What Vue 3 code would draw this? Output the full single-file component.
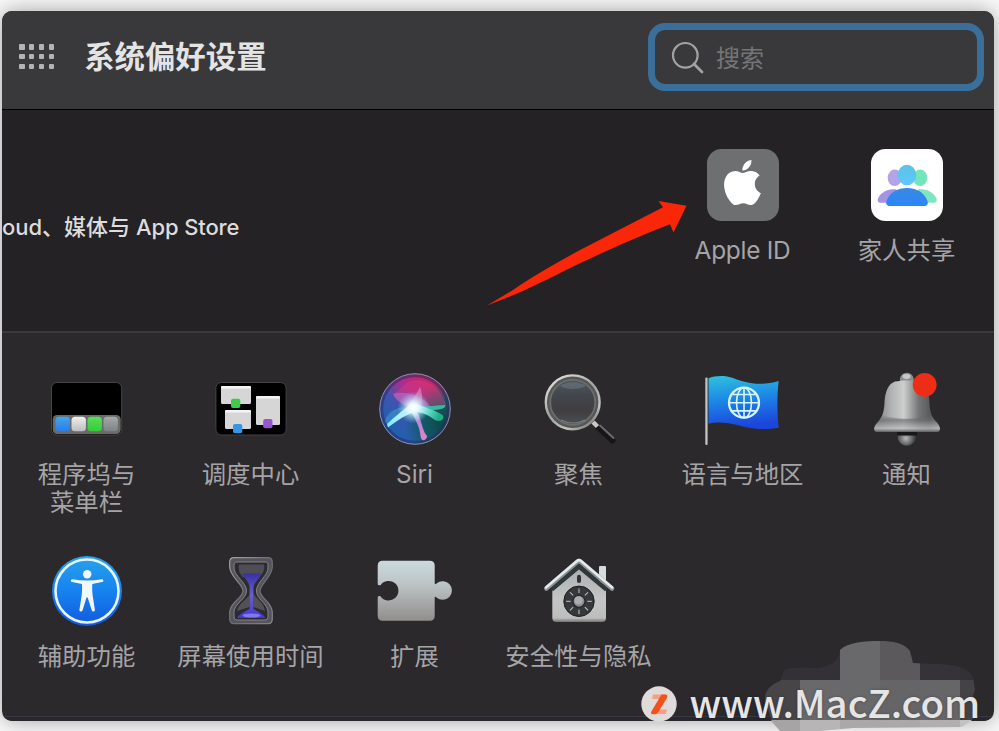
<template>
  <div class="desktop">
    <div class="window">
      <header class="toolbar">
        <button type="button" class="show-all" aria-label="显示全部">
          <span v-for="n in 12" :key="n" class="dot"></span>
        </button>
        <h1 class="title">系统偏好设置</h1>
        <label class="search">
          <svg class="search-icon" viewBox="0 0 34 34">
            <circle cx="15.3" cy="14.3" r="12.3" />
            <path d="M24 23 L32 31" />
          </svg>
          <input v-model="keyword" placeholder="搜索" />
        </label>
      </header>

      <!-- Account -->
      <section class="account">
        <p class="account-desc">oud、媒体与<span class="latin"> App Store</span></p>
        <div class="account-panes">
          <div class="pane">
            <svg class="pane-icon" viewBox="0 0 80 80">
              <rect x="4" y="4" width="72" height="72" rx="14.5" fill="#6d6f71" />
              <path
                transform="translate(16.9 15) scale(1.88)"
                fill="#fff"
                d="M12.152 6.896c-.948 0-2.415-1.078-3.96-1.04-2.04.027-3.91 1.183-4.961 3.014-2.117 3.675-.546 9.103 1.519 12.09 1.013 1.454 2.208 3.09 3.792 3.039 1.52-.065 2.09-.987 3.935-.987 1.831 0 2.35.987 3.96.948 1.637-.026 2.676-1.48 3.676-2.948 1.156-1.688 1.636-3.325 1.662-3.415-.039-.013-3.182-1.221-3.22-4.857-.026-3.04 2.48-4.494 2.597-4.559-1.429-2.09-3.623-2.324-4.39-2.376-2-.156-3.675 1.09-4.61 1.09zM15.53 3.83c.843-1.012 1.4-2.427 1.245-3.83-1.207.052-2.662.805-3.532 1.818-.78.896-1.454 2.338-1.273 3.714 1.338.104 2.715-.688 3.559-1.701"
              />
            </svg>
            <span class="pane-label latin">Apple ID</span>
          </div>
          <div class="pane">
            <svg class="pane-icon" viewBox="0 0 80 80">
              <defs>
                <linearGradient id="famHead" x1="0" y1="0" x2="0" y2="1">
                  <stop offset="0" stop-color="#5cc3e6" />
                  <stop offset="1" stop-color="#62c6fb" />
                </linearGradient>
                <linearGradient id="famBody" x1="0" y1="0" x2="0" y2="1">
                  <stop offset="0" stop-color="#3a8ae0" />
                  <stop offset="1" stop-color="#2b86fa" />
                </linearGradient>
              </defs>
              <rect x="4" y="4" width="72" height="72" rx="14.5" fill="#fff" />
              <ellipse cx="27.7" cy="32.8" rx="7" ry="8.3" fill="#b5a3ea" />
              <ellipse cx="53.2" cy="32.8" rx="7" ry="8.3" fill="#72e6bb" />
              <path d="M14 57.8 C10.5 57.8 10 55 11.5 52.5 C15 46.5 21 44 29 44.3 L38 57.8 Z" fill="#a493e4" />
              <path d="M66.5 57.8 C70 57.8 70.5 55 69 52.5 C65.5 46.5 59.5 44 51.5 44.3 L42 57.8 Z" fill="#7fe6c0" />
              <ellipse cx="40" cy="30" rx="9.3" ry="10.3" fill="url(#famHead)" />
              <path d="M23 61 C19.5 61 18.5 58.5 19.7 55.5 C23 47 31 43 40 43 C49 43 57 47 60.3 55.5 C61.5 58.5 60.5 61 57 61 Z" fill="url(#famBody)" />
            </svg>
            <span class="pane-label">家人共享</span>
          </div>
        </div>
      </section>

      <section class="panes">
        <div v-for="pane in panes" :key="pane.id" class="pane">
          <!-- Dock -->
          <svg v-if="pane.id === 'dock'" class="pane-icon" viewBox="0 0 80 80">
            <defs>
              <linearGradient v-for="(t, i) in dockTiles" :id="'tile' + i" :key="i" x1="0" y1="0" x2="0" y2="1">
                <stop offset="0" :stop-color="t.from" />
                <stop offset="1" :stop-color="t.to" />
              </linearGradient>
            </defs>
            <rect x="4.5" y="13.5" width="70.2" height="52.5" rx="5.5" fill="#000" stroke="#454447" />
            <rect x="5.7" y="46" width="68" height="19" rx="4.5" fill="#6a6a68" />
            <rect v-for="(t, i) in dockTiles" :key="i" :x="t.x" y="47.7" width="14.4" height="14.6" rx="3.5" :fill="`url(#tile${i})`" />
          </svg>

          <!-- Mission Control -->
          <svg v-else-if="pane.id === 'mission'" class="pane-icon" viewBox="0 0 80 80">
            <rect x="4.9" y="13.5" width="70.2" height="52.5" rx="5.5" fill="#000" stroke="#454447" />
            <g v-for="w in missionWindows" :key="w.color">
              <rect :x="w.x" :y="w.y" :width="w.w" :height="w.h" rx="1.5" fill="#d6d6d6" />
              <rect :x="w.x" :y="w.y" :width="w.w" height="2.6" rx="1.2" fill="#f4f4f4" />
              <rect :x="w.bx" :y="w.by" width="9.3" height="9.3" rx="2" :fill="w.color" />
            </g>
          </svg>

          <!-- Siri -->
          <svg v-else-if="pane.id === 'siri'" class="pane-icon" viewBox="0 0 80 80">
            <defs>
              <linearGradient id="siriBase" x1="0.15" y1="0.9" x2="0.8" y2="0.1">
                <stop offset="0" stop-color="#1b62ad" />
                <stop offset="0.42" stop-color="#3d55b0" />
                <stop offset="0.68" stop-color="#b02c8c" />
                <stop offset="1" stop-color="#c72860" />
              </linearGradient>
              <radialGradient id="siriTeal" cx="0.95" cy="0.72" r="0.6">
                <stop offset="0" stop-color="#06463f" />
                <stop offset="0.6" stop-color="#0b5b60" stop-opacity="0.85" />
                <stop offset="1" stop-color="#0b5b60" stop-opacity="0" />
              </radialGradient>
              <radialGradient id="siriGlow">
                <stop offset="0" stop-color="#fff" />
                <stop offset="0.35" stop-color="#e5fbff" stop-opacity="0.85" />
                <stop offset="1" stop-color="#7dd9f0" stop-opacity="0" />
              </radialGradient>
              <linearGradient id="siriLeft" x1="1" y1="0" x2="0" y2="1">
                <stop offset="0" stop-color="#fff" />
                <stop offset="1" stop-color="#72e8f5" />
              </linearGradient>
              <linearGradient id="siriDown" x1="0" y1="0" x2="0.3" y2="1">
                <stop offset="0" stop-color="#fff" />
                <stop offset="0.5" stop-color="#c98be0" />
                <stop offset="1" stop-color="#f088d0" />
              </linearGradient>
              <linearGradient id="siriRight" x1="0" y1="0" x2="1" y2="0.3">
                <stop offset="0" stop-color="#fff" />
                <stop offset="0.5" stop-color="#7be8da" />
                <stop offset="1" stop-color="#1fae8a" />
              </linearGradient>
            </defs>
            <circle cx="40" cy="40" r="35.3" fill="url(#siriBase)" />
            <circle cx="40" cy="40" r="35.3" fill="url(#siriTeal)" />
            <circle cx="40" cy="40" r="33.3" fill="none" stroke="#292b68" stroke-width="3" opacity="0.55" />
            <path d="M33 13 C50 7 66 18 71 36 C62 35 50 37 39 40 C28 36 21 31 18 24 C22 24 27 17 33 13 Z" fill="#e33c7f" opacity="0.4" />
            <path d="M18 25 C28 22 45 24 56 38 L39 40 C29 37 21 32 18 25 Z" fill="#bb76d7" opacity="0.5" />
            <path d="M10 52 C12 43 23 36 39 39 C28 44 19 50 13 57 Z" fill="#3faee0" opacity="0.45" />
            <path d="M31 40 C37 31 42 24 45 18 C48 26 48 33 44 42 Z" fill="#eba2dc" opacity="0.5" />
            <path d="M36 37 C48 39 60 36 70 36 C72 39 65 41 56 41 L39 42 Z" fill="#43d8bb" opacity="0.75" />
            <path d="M12 55 C19 48 27 42 37 34 L44 42 C32 44 22 52 13 58.5 Z" fill="url(#siriLeft)" />
            <path d="M38 39 C46 43 46 60 52 67 C52 72 46 73 45.5 67 C45 58 40 50 36 42 Z" fill="url(#siriDown)" opacity="0.9" />
            <path d="M38 34 C49 38 60 41 67.5 46 C71 51 63 54 58.5 50 C52 45 45 43 37 42 Z" fill="url(#siriRight)" />
            <circle cx="38.5" cy="38.5" r="16" fill="url(#siriGlow)" />
            <circle cx="40" cy="40" r="35.3" fill="none" stroke="#8f8dad" stroke-width="1" />
          </svg>

          <!-- Spotlight -->
          <svg v-else-if="pane.id === 'spotlight'" class="pane-icon" viewBox="0 0 80 80">
            <defs>
              <linearGradient id="lensRim" x1="0.1" y1="0" x2="0.8" y2="1">
                <stop offset="0" stop-color="#e5e5e3" />
                <stop offset="0.5" stop-color="#a1a1a0" />
                <stop offset="0.8" stop-color="#c4c4c3" />
                <stop offset="1" stop-color="#747474" />
              </linearGradient>
              <linearGradient id="lensGlass" x1="0" y1="0" x2="0" y2="1">
                <stop offset="0" stop-color="#505860" />
                <stop offset="0.35" stop-color="#42464c" />
                <stop offset="0.7" stop-color="#403e40" />
                <stop offset="1" stop-color="#4a5157" />
              </linearGradient>
            </defs>
            <path d="M59 58 L73.5 71.5" stroke="#161617" stroke-width="6" stroke-linecap="round" />
            <path d="M61 56.5 L74.5 69" stroke="#6a6a6b" stroke-width="2" stroke-linecap="round" />
            <path d="M54 53 L58.5 57.5" stroke="#c9c9c7" stroke-width="4.5" />
            <circle cx="33.7" cy="33.3" r="26.9" fill="#565655" stroke="url(#lensRim)" stroke-width="2.4" />
            <circle cx="33.7" cy="33.3" r="22.5" fill="url(#lensGlass)" stroke="#6c6d6d" stroke-width="1.8" />
            <path d="M21 17 C28 12 40 12 47 17 C40 21 28 21 21 17 Z" fill="#7c8a96" opacity="0.4" />
            <path d="M22 51 C30 55 38 55 46 51" fill="none" stroke="#a9abac" stroke-width="1.2" opacity="0.5" />
          </svg>

          <!-- Language & Region -->
          <svg v-else-if="pane.id === 'language'" class="pane-icon" viewBox="0 0 80 80">
            <defs>
              <linearGradient id="flagFill" x1="0" y1="0" x2="0.15" y2="1">
                <stop offset="0" stop-color="#2ec3dd" />
                <stop offset="0.5" stop-color="#1d84e6" />
                <stop offset="1" stop-color="#1b45dc" />
              </linearGradient>
            </defs>
            <path d="M5.5 9.3 C12 6.5 22 6 30 9 C43 14 56 17.5 75.7 12 C74 25 74 44 75.7 58.7 C60 61 48 60 36 56.5 C25 53.5 14 52.5 5.5 54.8 Z" fill="url(#flagFill)" />
            <rect x="2.3" y="8.5" width="2.3" height="67.5" rx="1" fill="#c3c3c1" />
            <g fill="none" stroke="#d5f5fa" stroke-width="1.6">
              <circle cx="41" cy="33.7" r="15" stroke-width="2.3" />
              <ellipse cx="41" cy="33.7" rx="7.5" ry="15" />
              <path d="M41 18.7 V48.7 M26 33.7 H56 M28.5 25.5 H53.5 M28.5 41.9 H53.5" />
            </g>
          </svg>

          <!-- Notifications -->
          <svg v-else-if="pane.id === 'notify'" class="pane-icon" viewBox="0 0 80 80">
            <defs>
              <linearGradient id="bellFill" x1="0" y1="0" x2="1" y2="0">
                <stop offset="0" stop-color="#777879" />
                <stop offset="0.25" stop-color="#aeb0b1" />
                <stop offset="0.45" stop-color="#cdcfcf" />
                <stop offset="0.68" stop-color="#737576" />
                <stop offset="0.85" stop-color="#58595b" />
                <stop offset="1" stop-color="#8b8c8d" />
              </linearGradient>
              <linearGradient id="bellRim" x1="0" y1="0" x2="0" y2="1">
                <stop offset="0" stop-color="#6a6c6e" stop-opacity="0" />
                <stop offset="0.3" stop-color="#6a6c6e" stop-opacity="0.7" />
                <stop offset="0.78" stop-color="#bfc0c0" stop-opacity="0.75" />
                <stop offset="1" stop-color="#5c5c5e" />
              </linearGradient>
              <radialGradient id="bellBall" cx="0.45" cy="0.6">
                <stop offset="0" stop-color="#b7b9ba" />
                <stop offset="1" stop-color="#3d3e40" />
              </radialGradient>
            </defs>
            <circle cx="39.8" cy="67.5" r="9.3" fill="url(#bellBall)" />
            <rect x="30" y="62" width="20" height="4.5" fill="#171719" />
            <circle cx="39.8" cy="10.8" r="7" fill="#8c8d8e" />
            <ellipse cx="39.5" cy="7.5" rx="4" ry="2.4" fill="#c8c8c8" />
            <path d="M28 12.5 C35 11 45 11 52 12.5 C60 16 62 24 62.5 34 C63 46 66 50 70 54 C73.5 58 74 63 69 63 H11 C6 63 6 58 10 54 C14 50 17 45 17.5 34 C18 23 21 15 28 12.5 Z" fill="url(#bellFill)" />
            <path d="M15.5 46 C30 51 50 51 64.5 46 C66 50 72 54 73 59 C73 62 72 63 69 63 H11 C8 63 7 61 7.5 58.5 C9 54 14 52 15.5 46 Z" fill="url(#bellRim)" />
            <circle cx="57.7" cy="15.8" r="11.9" fill="#ee2d17" />
          </svg>

          <!-- Accessibility -->
          <svg v-else-if="pane.id === 'access'" class="pane-icon" viewBox="0 0 80 80">
            <defs>
              <linearGradient id="accessFill" x1="0" y1="0" x2="0" y2="1">
                <stop offset="0" stop-color="#26a4e8" />
                <stop offset="0.5" stop-color="#1682f0" />
                <stop offset="1" stop-color="#1259dd" />
              </linearGradient>
            </defs>
            <circle cx="40" cy="40" r="35" fill="url(#accessFill)" />
            <circle cx="40" cy="40" r="31.5" fill="none" stroke="#e8f4ff" stroke-width="2.6" />
            <g fill="#f2f7fc">
              <circle cx="40.2" cy="23.2" r="4.2" />
              <path d="M25.5 28.2 C35 29.8 45 29.8 54.7 28.2 C56.7 28 57 30.6 55 31.1 L45.3 33 C45 38 45.3 43 46.2 48 L47.9 58.8 C48.1 61 45.4 61.2 44.7 59.2 L40.7 46.5 H39.5 L35.6 59.2 C34.9 61.2 32.2 61 32.4 58.8 L34.1 48 C35 43 35.3 38 35 33 L25.2 31.1 C23.3 30.6 23.5 28 25.5 28.2 Z" />
            </g>
          </svg>

          <!-- Screen Time -->
          <svg v-else-if="pane.id === 'screentime'" class="pane-icon" viewBox="0 0 80 80">
            <defs>
              <linearGradient id="sand" x1="0" y1="0" x2="0" y2="1">
                <stop offset="0" stop-color="#3830a3" />
                <stop offset="0.5" stop-color="#6961c8" />
                <stop offset="1" stop-color="#4336d5" />
              </linearGradient>
              <linearGradient id="glassEdge" x1="0" y1="0" x2="1" y2="1">
                <stop offset="0" stop-color="#a5a4a8" />
                <stop offset="0.5" stop-color="#6c6b71" />
                <stop offset="1" stop-color="#85848b" />
              </linearGradient>
            </defs>
            <path d="M23 6.7 H57 C60 6.7 61.3 8.5 61.3 11.5 V16 C61 26 49 33 49 40 C49 47 61 51 61.3 61 V68 C61.3 71 60 72.7 57 72.7 H23 C20 72.7 18.7 71 18.7 68 V61 C19 51 32 47 32 40 C32 33 19 26 18.7 16 V11.5 C18.7 8.5 20 6.7 23 6.7 Z" fill="#56555b" stroke="url(#glassEdge)" stroke-width="1.2" />
            <path d="M27 11 H54 C56 11 57 12 57 14 V17 C57 25 45.5 31 45.5 40 C45.5 48 57 53 57 61 V65 C57 68 56 69 53 69 H27 C24 69 23 68 23 65 V61 C23 53 35.5 48 35.5 40 C35.5 31 23 25 23 17 V14 C23 12 25 11 27 11 Z" fill="#2c2b30" stroke="#858389" stroke-width="1" />
            <path d="M28 13.5 H53 C54 20 51 23 48 26 H32 C29 23 27 20 28 13.5 Z" fill="#4f4e54" />
            <path d="M31 23 C36 22 44 22 51 23 C48 28 43.5 31 42.5 36 V58 C46 60 52 63 54.5 67 H26 C28 63 35 60 38.5 58 V36 C38 31 34 28 31 23 Z" fill="url(#sand)" />
            <ellipse cx="40.5" cy="64.5" rx="9" ry="2" fill="#8179e9" />
            <path d="M42.5 43 C47 49 53 52 54 60 L42.5 56 Z M38.5 44 C34 50 27 53 26 60 L38.5 56 Z" fill="#6b6a70" opacity="0.6" />
          </svg>

          <!-- Extensions -->
          <svg v-else-if="pane.id === 'extension'" class="pane-icon" viewBox="0 0 80 80">
            <defs>
              <linearGradient id="puzzleFill" x1="0" y1="0" x2="0" y2="1">
                <stop offset="0" stop-color="#cbdadd" />
                <stop offset="0.4" stop-color="#bcc3c5" />
                <stop offset="1" stop-color="#918e8d" />
              </linearGradient>
            </defs>
            <path d="M7.7 9.7 H54.7 Q59.7 9.7 59.7 14.7 V32.2 Q60 34 61.5 32.5 A9.3 9.3 0 1 1 61.5 46.5 Q60 45 59.7 46.8 V64.7 Q59.7 69.7 54.7 69.7 H7.7 Q2.7 69.7 2.7 64.7 V46.5 Q2.7 44.7 5.5 45.2 A9.8 9.8 0 1 0 5.5 34.2 Q2.7 34.7 2.7 33 V14.7 Q2.7 9.7 7.7 9.7 Z" fill="url(#puzzleFill)" />
          </svg>

          <!-- Security & Privacy -->
          <svg v-else class="pane-icon" viewBox="0 0 80 80">
            <defs>
              <linearGradient id="houseFill" x1="0" y1="0" x2="0" y2="1">
                <stop offset="0" stop-color="#a9acad" />
                <stop offset="0.6" stop-color="#c4c6c6" />
                <stop offset="0.93" stop-color="#bdbdbd" />
                <stop offset="1" stop-color="#737374" />
              </linearGradient>
            </defs>
            <rect x="60" y="15" width="7" height="18" rx="1" fill="#d6dcde" />
            <path d="M40 14 L67 37 V67 Q67 71 63 71 H17.3 Q13.3 71 13.3 67 V37 Z" fill="url(#houseFill)" />
            <path d="M12.5 38.5 L40 15.5 L67.5 38.5" fill="none" stroke="#30383c" stroke-width="4.5" />
            <path d="M7.3 37.5 L38 11 Q40 9.3 42 11 L73 37.5" fill="none" stroke="#8d9294" stroke-width="4.6" stroke-linecap="round" stroke-linejoin="round" />
            <path d="M7 36.5 L38 10 Q40 8.3 42 10 L73.2 36.5" fill="none" stroke="#e5ebec" stroke-width="2.6" stroke-linecap="round" stroke-linejoin="round" />
            <rect x="38" y="23.7" width="4" height="8.3" rx="2" fill="#303335" />
            <circle cx="40" cy="50.3" r="15.2" fill="#36393b" stroke="#1d1e1f" stroke-width="1" />
            <path v-for="n in 8" :key="n" d="M40 37.5 V42" stroke="#c4c6c7" stroke-width="1" :transform="`rotate(${n * 45} 40 50.3)`" />
            <circle cx="40" cy="50.3" r="6" fill="#8b8e90" stroke="#242627" stroke-width="1.2" />
            <circle cx="39.5" cy="49.3" r="4" fill="#aaadae" />
          </svg>

          <span class="pane-label">{{ pane.label }}</span>
        </div>
      </section>
      <div class="window-foot"></div>
    </div>

    <!-- Arrow pointing at Apple ID -->
    <svg class="arrow" viewBox="0 0 202 108">
      <path d="M200.5 7.7 L172.5 3 L177 9.3 L94 52 C70 65 46 79 27 92 L1 107.5 L30 96 C50 87.5 72 76 94 65.3 C122 52 156 37 184 26.3 L187.5 34.5 Z" fill="#f92708" />
    </svg>

    <!-- Mosaic smear -->
    <svg class="mosaic" viewBox="760 636 220 95">
      <defs>
        <clipPath id="smear">
          <path d="M765 700 C764 690 772 684 780 681 L784 670 C795 666 807 668 820 668 C832 665 838 662 840 650 C848 642 865 641 880 641 C893 641 904 643 910 651 L913 663 L933 664 C950 664 968 666 973 677 L975 690 L973 696 L977 708 L972 720 L962 727 L853 728 L820 731 H780 L772 722 Z" />
        </clipPath>
      </defs>
      <g clip-path="url(#smear)">
        <rect v-for="c in mosaicCells" :key="c.x + '-' + c.y" :x="c.x" :y="c.y" width="40" height="40" :fill="c.color" shape-rendering="crispEdges" />
      </g>
    </svg>

    <div class="watermark">
      <svg class="watermark-logo" viewBox="0 0 36 36">
        <circle cx="18" cy="18" r="17.7" fill="#dedbda" />
        <path d="M12 8.5 H25 L22 13 H11 Z M14 23.5 H26 L25 28 H11 Z" fill="#f5a082" />
        <path d="M20.5 8.5 H24.5 Q27.3 8.5 26 12 L17 26.5 Q16 28.3 14 28.3 H11.5 Q9 28 10.7 25 Z" fill="#f4501c" />
      </svg>
      <span class="watermark-text">www.MacZ.com</span>
    </div>
  </div>
</template>

<script setup>
import { ref } from 'vue'

const keyword = ref('')

const panes = [
  { id: 'dock', label: '程序坞与\n菜单栏' },
  { id: 'mission', label: '调度中心' },
  { id: 'siri', label: 'Siri' },
  { id: 'spotlight', label: '聚焦' },
  { id: 'language', label: '语言与地区' },
  { id: 'notify', label: '通知' },
  { id: 'access', label: '辅助功能' },
  { id: 'screentime', label: '屏幕使用时间' },
  { id: 'extension', label: '扩展' },
  { id: 'security', label: '安全性与隐私' },
]

const dockTiles = [
  { x: 8.5, from: '#41a6ee', to: '#2a7de6' },
  { x: 24.5, from: '#f0f0f0', to: '#bdbdbf' },
  { x: 40.5, from: '#5bdc58', to: '#34cb3b' },
  { x: 56.5, from: '#a3a9ad', to: '#7c8286' },
]

const missionWindows = [
  { x: 10, y: 17, w: 30, h: 18, bx: 20, by: 29.8, color: '#41cb49' },
  { x: 14, y: 41, w: 26, h: 19, bx: 22, by: 55, color: '#3894e4' },
  { x: 45, y: 27, w: 24, h: 29, bx: 52.2, by: 50, color: '#9656cf' },
]

const mosaicCells = [
  { x: 760, y: 640, color: '#333135' },
  { x: 800, y: 640, color: '#333135' },
  { x: 840, y: 640, color: '#69686b' },
  { x: 880, y: 640, color: '#5b595c' },
  { x: 920, y: 640, color: '#353337' },
  { x: 960, y: 640, color: '#333135' },
  { x: 760, y: 680, color: '#474548' },
  { x: 800, y: 680, color: '#69686b' },
  { x: 840, y: 680, color: '#69686b' },
  { x: 880, y: 680, color: '#656466' },
  { x: 920, y: 680, color: '#666567' },
  { x: 960, y: 680, color: '#444245' },
  { x: 760, y: 720, color: '#a6a4a5' },
  { x: 800, y: 720, color: '#b7b5b6' },
  { x: 840, y: 720, color: '#aaa8a9' },
  { x: 880, y: 720, color: '#aaa8a9' },
  { x: 920, y: 720, color: '#b0aeaf' },
  { x: 960, y: 720, color: '#c4c2c3' },
]
</script>

<style>
body {
  background: #fbfafa;
  overflow: hidden;
}
</style>

<style scoped>
.desktop {
  position: relative;
  box-sizing: border-box;
  width: 999px;
  height: 731px;
  padding: 11px 5px 10px 2px;
  overflow: hidden;
  font-family: Inter, "Noto Sans CJK SC", sans-serif;
}

.window {
  display: flex;
  flex-direction: column;
  height: 710px;
  border-radius: 10px;
  overflow: hidden;
  background: #2b292c;
  box-shadow: 0 0 22px rgba(0, 0, 0, 0.36);
}

.toolbar {
  box-sizing: border-box;
  display: flex;
  flex-shrink: 0;
  align-items: flex-start;
  height: 99px;
  padding: 12px 10px 0 17px;
  background: #39393b;
  border-bottom: 1px solid #000;
}

.show-all {
  display: grid;
  grid-template-columns: repeat(4, 5.5px);
  gap: 4.4px;
  margin-top: 21px;
  padding: 0;
  border: 0;
  background: none;
}

.dot {
  height: 5.5px;
  border-radius: 1px;
  background: #b4b4b5;
}

.title {
  flex: 1;
  margin: 14px 0 0 30px;
  font-size: 30.4px;
  font-weight: 600;
  line-height: 40px;
  color: #e4e4e5;
}

.search {
  box-sizing: border-box;
  display: flex;
  align-items: center;
  width: 336px;
  height: 68px;
  padding: 1px 15px 0;
  border: 7px solid #3a6f99;
  border-radius: 17px;
}

.search-icon {
  flex-shrink: 0;
  width: 34px;
  height: 34px;
  fill: none;
  stroke: #a2a2a4;
  stroke-width: 2.2;
}

.search-icon path {
  stroke-width: 2.8;
  stroke-linecap: round;
}

.search input {
  width: 200px;
  margin-left: 12px;
  padding: 1px 0 0;
  border: 0;
  outline: 0;
  background: transparent;
  font: 24px Inter, "Noto Sans CJK SC", sans-serif;
  color: #e4e4e5;
}

.search input::placeholder {
  color: #757577;
  opacity: 1;
}

.account {
  box-sizing: border-box;
  display: flex;
  flex-shrink: 0;
  justify-content: space-between;
  height: 223px;
  padding: 35px 5px 0 0;
  background: #242225;
  border-bottom: 2px solid #3b393c;
}

.account-desc {
  margin: 66px 0 0;
  font-size: 22px;
  font-weight: 500;
  line-height: 32px;
  color: #dcdbdd;
}

.account-desc .latin {
  letter-spacing: -0.1px;
}

.account-panes {
  display: flex;
}

.pane {
  display: flex;
  flex-direction: column;
  align-items: center;
  width: 164px;
}

.pane-icon {
  width: 80px;
  height: 80px;
}

.pane-label {
  margin-top: 11px;
  padding-right: 1px;
  font-size: 24.4px;
  line-height: 28px;
  color: #a5a4a6;
  text-align: center;
  white-space: pre;
}

.pane-label.latin {
  letter-spacing: -0.25px;
}

.panes {
  flex: 1;
  display: grid;
  grid-template-columns: repeat(6, 164px);
  grid-template-rows: 182px 1fr;
  min-height: 0;
  padding: 36px 5px 0 3px;
}

.window-foot {
  flex-shrink: 0;
  height: 4px;
  border-top: 1px solid #39373f;
  background: #29272e;
}

.arrow {
  position: absolute;
  left: 486px;
  top: 198px;
  width: 202px;
  height: 108px;
}

.mosaic {
  position: absolute;
  left: 760px;
  top: 636px;
  width: 220px;
  height: 95px;
}

.watermark {
  position: absolute;
  left: 641px;
  top: 680px;
  display: flex;
  align-items: center;
  height: 48px;
}

.watermark-logo {
  width: 36px;
  height: 36px;
}

.watermark-text {
  margin: -4px 0 0 12.5px;
  font-family: "Noto Sans CJK SC", sans-serif;
  font-size: 38.3px;
  font-weight: 500;
  line-height: 48px;
  color: #e6e5e6;
  text-shadow: 0 0 3px rgba(0, 0, 0, 0.3);
}
</style>
